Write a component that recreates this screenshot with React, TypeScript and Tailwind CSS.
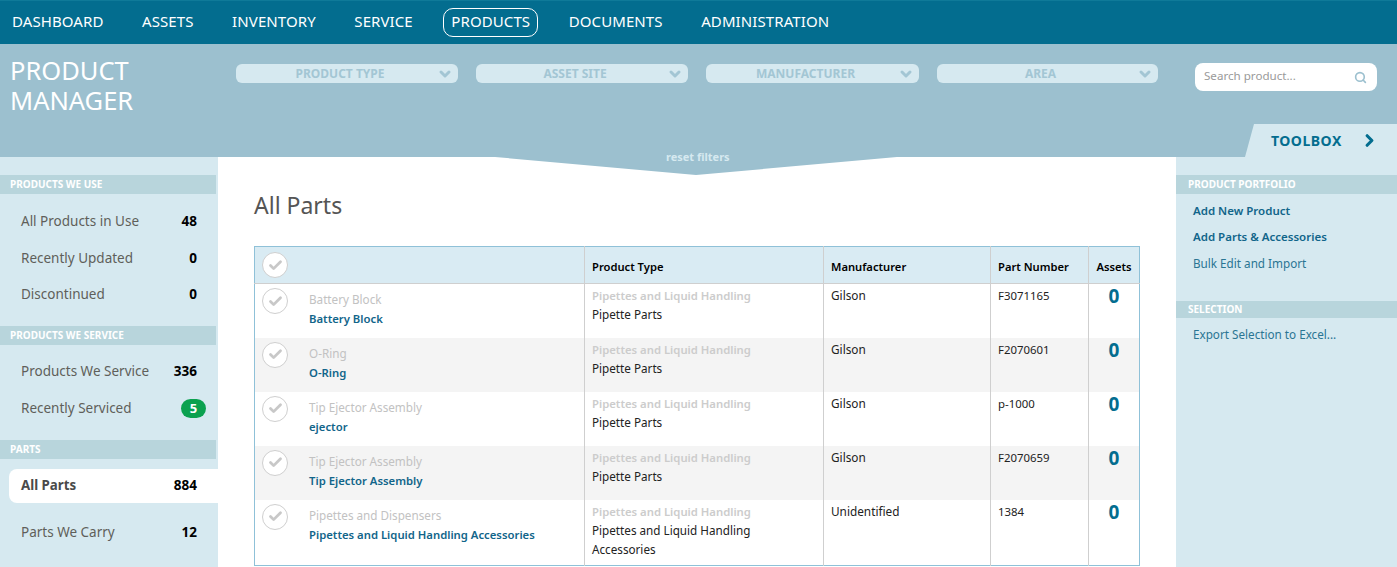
import React from "react";
import { ChevronDown, ChevronRight, Search, Check } from "lucide-react";

const font = "font-['Noto_Sans','Open_Sans',sans-serif]";

const nav = ["DASHBOARD", "ASSETS", "INVENTORY", "SERVICE", "PRODUCTS", "DOCUMENTS", "ADMINISTRATION"];
const filters = [
  { label: "PRODUCT TYPE", cls: "w-[222px]" },
  { label: "ASSET SITE", cls: "w-[212px]" },
  { label: "MANUFACTURER", cls: "w-[213px]" },
  { label: "AREA", cls: "w-[221px]" },
];

const rows = [
  { a: "Battery Block", b: "Battery Block", t: ["Pipette Parts"], m: "Gilson", p: "F3071165", h: "h-[54px]" },
  { a: "O-Ring", b: "O-Ring", t: ["Pipette Parts"], m: "Gilson", p: "F2070601", h: "h-[54px]" },
  { a: "Tip Ejector Assembly", b: "ejector", t: ["Pipette Parts"], m: "Gilson", p: "p-1000", h: "h-[54px]" },
  { a: "Tip Ejector Assembly", b: "Tip Ejector Assembly", t: ["Pipette Parts"], m: "Gilson", p: "F2070659", h: "h-[54px]" },
  { a: "Pipettes and Dispensers", b: "Pipettes and Liquid Handling Accessories", t: ["Pipettes and Liquid Handling", "Accessories"], m: "Unidentified", p: "1384", h: "h-[66px]" },
];

function Circle() {
  return (
    <div className="flex h-[26px] w-[26px] shrink-0 items-center justify-center rounded-full border border-[#cfcfcf] bg-white">
      <Check size={15} strokeWidth={4.5} className="text-[#c8c8c8]" />
    </div>
  );
}

function SideHead({ children, className = "" }: { children: React.ReactNode; className?: string }) {
  return (
    <div className={`flex items-center bg-[#b8d5dc] pl-[10px] text-[10px] font-bold text-white ${className}`}>
      {children}
    </div>
  );
}

function SideItem({ label, value, h }: { label: string; value: string; h: string }) {
  return (
    <div className={`flex items-center justify-between pl-[21px] pr-[21px] ${h}`}>
      <span className="text-[13.5px] text-[#5f5f5a]">{label}</span>
      <span className="text-[13.5px] font-bold text-black">{value}</span>
    </div>
  );
}

export default function App() {
  return (
    <div className={`flex h-[567px] w-[1397px] flex-col overflow-hidden bg-white ${font}`}>
      <nav className="flex h-[44px] shrink-0 items-center gap-[7.5px] border-t border-[#0f7a99] bg-[#036d8f] pl-[4px] text-[15px] tracking-[0.1px] text-white">
        {nav.map((n) => (
          <a
            key={n}
            className={`mr-[15px] flex h-[29px] items-center rounded-[10px] border px-[7px] pb-[2px] ${
              n === "PRODUCTS" ? "border-white" : "border-transparent"
            }`}
          >
            {n}
          </a>
        ))}
      </nav>

      <header className="relative flex h-[113px] shrink-0 items-start bg-[#9cc0cf]">
        <h1 className="ml-[10px] mt-[11px] w-[226px] text-[25.5px] font-normal leading-[30px] text-white">
          PRODUCT
          <br />
          MANAGER
        </h1>
        <div className="mt-[20px] flex gap-[18px]">
          {filters.map((f) => (
            <div key={f.label} className={`relative flex h-[19px] items-center justify-center rounded-[6px] bg-[#d6e9f0] pr-[14px] ${f.cls}`}>
              <span className="text-[12px] font-bold text-[#a3c6d4]">{f.label}</span>
              <ChevronDown size={16} strokeWidth={4.5} className="absolute right-[5px] text-[#a3c6d4]" />
            </div>
          ))}
        </div>
        <div className="ml-[37px] mt-[19px] flex h-[28px] w-[182px] items-center justify-between rounded-[8px] bg-white pl-[9px] pr-[10px]">
          <span className="pb-[2px] text-[11.6px] text-[#9a9a9a]">Search product...</span>
          <Search size={13} strokeWidth={3} className="text-[#9cc0cf]" />
        </div>
        <div className="absolute bottom-0 right-0 flex h-[33px] w-[152px] items-center bg-[#d6e9f0] pl-[26px] [clip-path:polygon(9px_0,100%_0,100%_100%,0_100%)]">
          <span className="text-[14px] font-bold tracking-[0.5px] text-[#036d8f]">TOOLBOX</span>
          <ChevronRight size={19} strokeWidth={4} className="ml-[18px] text-[#036d8f]" />
        </div>
      </header>

      <div className="relative flex min-h-0 flex-1">
        <aside className="w-[218px] shrink-0 bg-[#d6e9f0] pt-[18px]">
          <SideHead className="mr-[2px] h-[19px]">PRODUCTS WE USE</SideHead>
          <div className="mt-[9px]">
            <SideItem label="All Products in Use" value="48" h="h-[37px]" />
            <SideItem label="Recently Updated" value="0" h="h-[37px]" />
            <SideItem label="Discontinued" value="0" h="h-[34px]" />
          </div>
          <SideHead className="mr-[2px] mt-[15px] h-[19px]">PRODUCTS WE SERVICE</SideHead>
          <div className="mt-[8px]">
            <SideItem label="Products We Service" value="336" h="h-[37px]" />
            <div className="flex h-[37px] items-center justify-between pl-[21px] pr-[12px]">
              <span className="text-[13.5px] text-[#5f5f5a]">Recently Serviced</span>
              <span className="flex h-[19px] w-[25px] items-center justify-center rounded-full bg-[#0ba14f] text-[13px] font-bold text-white">5</span>
            </div>
          </div>
          <SideHead className="mr-[2px] mt-[13px] h-[19px]">PARTS</SideHead>
          <div className="ml-[9px] mt-[10px] flex h-[34px] items-center justify-between rounded-l-[8px] bg-white pb-[1px] pl-[12px] pr-[21px]">
            <span className="text-[13.3px] font-bold text-[#4a4a4a]">All Parts</span>
            <span className="text-[13.5px] font-bold text-black">884</span>
          </div>
          <div className="mt-[11px]">
            <SideItem label="Parts We Carry" value="12" h="h-[37px]" />
          </div>
        </aside>

        <main className="relative min-w-0 flex-1 px-[36px] pt-[34px]">
          <h2 className="text-[23px] font-normal leading-[28px] text-[#555]">All Parts</h2>
          <table className="mt-[27px] w-[885px] table-fixed border-collapse border border-[#8fc1d8] text-[12px]">
            <colgroup>
              <col className="w-[330px]" />
              <col className="w-[239px]" />
              <col className="w-[167px]" />
              <col className="w-[98px]" />
              <col className="w-[51px]" />
            </colgroup>
            <thead>
              <tr className="h-[37px] bg-[#d9ebf3] text-left text-[11.2px] font-semibold text-black">
                <th className="border-b border-[#cfcfcf] pl-[7px]"><Circle /></th>
                {["Product Type", "Manufacturer", "Part Number", "Assets"].map((c, i) => (
                  <th key={c} className={`border-b border-l border-[#cfcfcf] pt-[5px] font-semibold ${i === 3 ? "text-center" : "pl-[7px]"}`}>
                    {c}
                  </th>
                ))}
              </tr>
            </thead>
            <tbody>
              {rows.map((r, i) => (
                <tr key={i} className={`${r.h} align-top ${i % 2 ? "bg-[#f4f4f4]" : "bg-white"}`}>
                  <td className="pl-[7px] pt-[4px]">
                    <div className="flex">
                      <Circle />
                      <div className="ml-[21px] pt-[2px] leading-[19px]">
                        <div className="text-[11.7px] text-[#c2c2c2]">{r.a}</div>
                        <div className="text-[11.3px] font-semibold text-[#11658a]">{r.b}</div>
                      </div>
                    </div>
                  </td>
                  <td className="border-l border-[#cfcfcf] pl-[7px] pt-[2px] leading-[19px]">
                    <div className="text-[11.3px] font-semibold text-[#cccccc]">Pipettes and Liquid Handling</div>
                    {r.t.map((t) => (
                      <div key={t} className="text-[11.7px] text-[#222]">{t}</div>
                    ))}
                  </td>
                  <td className="border-l border-[#cfcfcf] pl-[7px] pt-[2px] text-[11.8px] leading-[19px] text-[#222]">{r.m}</td>
                  <td className="border-l border-[#cfcfcf] pl-[7px] pt-[2px] text-[11.4px] leading-[19px] text-[#222]">{r.p}</td>
                  <td className="border-l border-[#cfcfcf] pt-[1px] text-center text-[19px] font-bold leading-[22px] text-[#036d8f]">0</td>
                </tr>
              ))}
            </tbody>
          </table>
          <div className="absolute left-[277px] top-0 h-[18px] w-[402px] bg-[#9cc0cf] [clip-path:polygon(0_0,100%_0,50%_100%)]" />
          <span className="absolute left-[448px] top-[-8px] text-[11px] font-bold text-[#d6e9f0]">reset filters</span>
        </main>

        <aside className="w-[221px] shrink-0 bg-[#d6e9f0] pt-[18px] text-[11.7px]">
          <SideHead className="h-[19px] pl-[12px]">PRODUCT PORTFOLIO</SideHead>
          <div className="pl-[17px] pt-[4px] text-[#11658a]">
            <div className="flex h-[26px] items-center text-[11.5px] font-semibold">Add New Product</div>
            <div className="flex h-[26px] items-center text-[11.5px] font-semibold">Add Parts &amp; Accessories</div>
            <div className="flex h-[26px] items-center pt-[1px] text-[#2a7593]">Bulk Edit and Import</div>
          </div>
          <SideHead className="mt-[25px] h-[17px] pl-[12px]">SELECTION</SideHead>
          <div className="flex h-[34px] items-center pl-[17px] text-[#2a7593]">Export Selection to Excel...</div>
        </aside>
      </div>
    </div>
  );
}
